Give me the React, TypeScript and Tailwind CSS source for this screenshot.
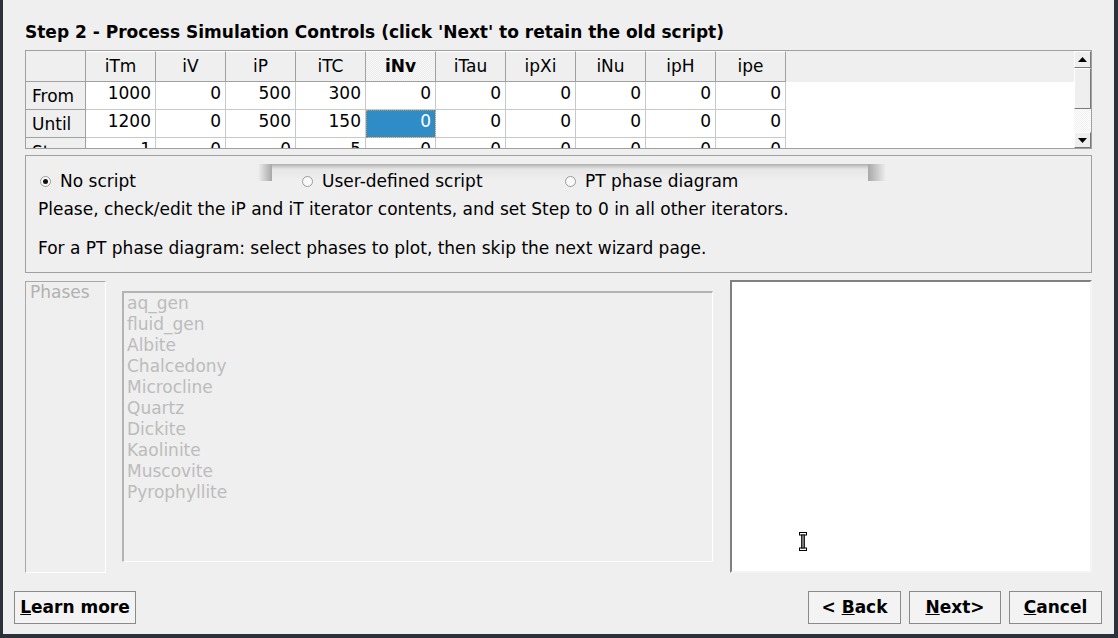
import React from 'react'

const cols = ['iTm', 'iV', 'iP', 'iTC', 'iNv', 'iTau', 'ipXi', 'iNu', 'ipH', 'ipe']

const rows: [string, number[]][] = [
  ['From', [1000, 0, 500, 300, 0, 0, 0, 0, 0, 0]],
  ['Until', [1200, 0, 500, 150, 0, 0, 0, 0, 0, 0]],
  ['Step', [1, 0, 0, 5, 0, 0, 0, 0, 0, 0]],
]

const phases = [
  'aq_gen',
  'fluid_gen',
  'Albite',
  'Chalcedony',
  'Microcline',
  'Quartz',
  'Dickite',
  'Kaolinite',
  'Muscovite',
  'Pyrophyllite',
]

function Arrow({ up }: { up?: boolean }) {
  return (
    <svg width="9" height="5" viewBox="0 0 9 5">
      {up ? <polygon points="0,5 9,5 4.5,0" fill="#000" /> : <polygon points="0,0 9,0 4.5,5" fill="#000" />}
    </svg>
  )
}

function Radio({ checked, label }: { checked?: boolean; label: string }) {
  return (
    <div className="flex items-center gap-[9px]">
      <span className="w-[11px] h-[11px] rounded-full border border-[#9a9a9a] bg-[#fafafa] flex items-center justify-center">
        {checked && <span className="w-[5px] h-[5px] rounded-full bg-[#111]" />}
      </span>
      <span>{label}</span>
    </div>
  )
}

function Button({ children, w }: { children: React.ReactNode; w: string }) {
  return (
    <div className={`${w} h-[33px] border border-[#8a8a8a] bg-[#f3f3f3] flex items-center justify-center font-bold`}>
      {children}
    </div>
  )
}

export default function App() {
  return (
    <div className="w-[1118px] h-[638px] bg-[#2d3139] pl-[3px] pr-[4px] pb-[4px] font-['DejaVu_Sans',sans-serif] text-[17px] text-black">
      <div className="h-full bg-[#efefef] flex flex-col">
        <div className="px-[22px] pt-[22px] h-[42px] leading-[20px] font-bold">
          Step 2 - Process Simulation Controls (click 'Next' to retain the old script)
        </div>

        {/* iterator table */}
        <div className="mx-[22px] mt-[8px] h-[99px] border border-[#a0a0a0] flex bg-white">
          <div className="flex-1 overflow-hidden">
            <div className="flex h-[31px] bg-[#efefef]">
              <div className="w-[60px] shrink-0 border-r border-b border-[#a0a0a0]" />
              {cols.map((c) => (
                <div
                  key={c}
                  className={`w-[70px] shrink-0 border-r border-b border-[#a0a0a0] border-t border-t-white flex items-center justify-center ${
                    c === 'iNv'
                      ? 'font-bold bg-[repeating-conic-gradient(#ececec_0%_25%,#f8f8f8_0%_50%)] bg-[length:2px_2px]'
                      : ''
                  }`}
                >
                  {c}
                </div>
              ))}
            </div>
            {rows.map(([name, vals], ri) => (
              <div key={name} className="flex h-[28px]">
                <div className="w-[60px] shrink-0 bg-[#efefef] border-r border-b border-[#a0a0a0] flex items-center pl-[6px] pt-[2px]">
                  {name}
                </div>
                {vals.map((v, ci) => {
                  const sel = ri === 1 && ci === 4
                  return (
                    <div
                      key={ci}
                      className={`w-[70px] shrink-0 border-r border-b border-[#c8c8c8] flex justify-end pr-[4px] leading-[22px] ${
                        sel ? 'bg-[#308cc6] text-white outline-1 outline-dotted outline-[#c49a5a] -outline-offset-1' : ''
                      }`}
                    >
                      {v}
                    </div>
                  )
                })}
              </div>
            ))}
          </div>
          <div className="w-[17px] shrink-0 flex flex-col bg-[#efefef]">
            <div className="h-[17px] border-t border-l border-white border-r border-b border-r-[#7a7a7a] border-b-[#7a7a7a] flex items-center justify-center">
              <Arrow up />
            </div>
            <div className="h-[41px] border-t border-l border-white border-r border-b border-r-[#7a7a7a] border-b-[#7a7a7a]" />
            <div className="flex-1 bg-[repeating-conic-gradient(#efefef_0%_25%,#ffffff_0%_50%)] bg-[length:2px_2px]" />
            <div className="h-[16px] border-t border-l border-white border-r border-b border-r-[#7a7a7a] border-b-[#7a7a7a] flex items-center justify-center">
              <Arrow />
            </div>
          </div>
        </div>

        {/* script choice group */}
        <div className="relative mx-[22px] mt-[6px] h-[118px] border border-[#a0a0a0] pl-[12px] pt-[13px]">
          <div className="absolute left-[232px] top-[8px] w-[14px] h-[17px] bg-linear-to-r from-[#efefef] to-[#a8a8a8]" />
          <div className="absolute left-[246px] top-[8px] w-[596px] h-[17px] bg-linear-to-b from-[#b0b0b0] via-[#e6e6e6] via-30% to-[#efefef]" />
          <div className="absolute left-[842px] top-[8px] w-[18px] h-[17px] bg-linear-to-r from-[#a8a8a8] to-[#efefef]" />
          <div className="relative grid grid-cols-[262px_263px_auto] h-[20px] items-center pl-[2px]">
            <Radio checked label="No script" />
            <Radio label="User-defined script" />
            <Radio label="PT phase diagram" />
          </div>
          <div className="mt-[11px] leading-[19.5px]">
            <div>Please, check/edit the iP and iT iterator contents, and set Step to 0 in all other iterators.</div>
            <div className="h-[19.5px]" />
            <div>For a PT phase diagram: select phases to plot, then skip the next wizard page.</div>
          </div>
        </div>

        {/* phases */}
        <div className="mx-[22px] mt-[7px] h-[293px] flex">
          <div className="w-[81px] h-[292px] mt-[1px] border border-[#a8a8a8] border-r-white border-b-white text-[#b2b2b2] pl-[4px] leading-[20px]">
            Phases
          </div>
          <div className="w-[591px] h-[271px] mt-[11px] ml-[16px] border-2 border-[#b4b4b4] border-r border-b border-r-white border-b-white text-[#bcbcbc] pl-[3px] leading-[21px]">
            {phases.map((p) => (
              <div key={p}>{p}</div>
            ))}
          </div>
          <div className="relative flex-1 ml-[17px] h-[293px] bg-white border-t-2 border-l-2 border-[#808080] border-r-2 border-b-2 border-r-[#f4f4f4] border-b-[#f4f4f4]">
            <svg className="absolute left-[67px] top-[250px]" width="8" height="19" viewBox="0 0 8 19">
              <rect x="0.5" y="0.5" width="7" height="2.5" fill="#fff" stroke="#000" />
              <rect x="0.5" y="16" width="7" height="2.5" fill="#fff" stroke="#000" />
              <rect x="2.5" y="3" width="3" height="13" fill="#777" stroke="#000" strokeWidth="0.8" />
            </svg>
          </div>
        </div>

        {/* buttons */}
        <div className="mt-[18px] flex pl-[11px] pr-[12px]">
          <Button w="w-[122px]">
            <span>
              <span className="underline">L</span>earn more
            </span>
          </Button>
          <div className="flex-1" />
          <div className="flex gap-[8px]">
            <Button w="w-[93px]">
              <span>
                &lt; <span className="underline">B</span>ack
              </span>
            </Button>
            <Button w="w-[92px]">
              <span>
                <span className="underline">N</span>ext&gt;
              </span>
            </Button>
            <Button w="w-[93px]">
              <span>
                <span className="underline">C</span>ancel
              </span>
            </Button>
          </div>
        </div>
      </div>
    </div>
  )
}
